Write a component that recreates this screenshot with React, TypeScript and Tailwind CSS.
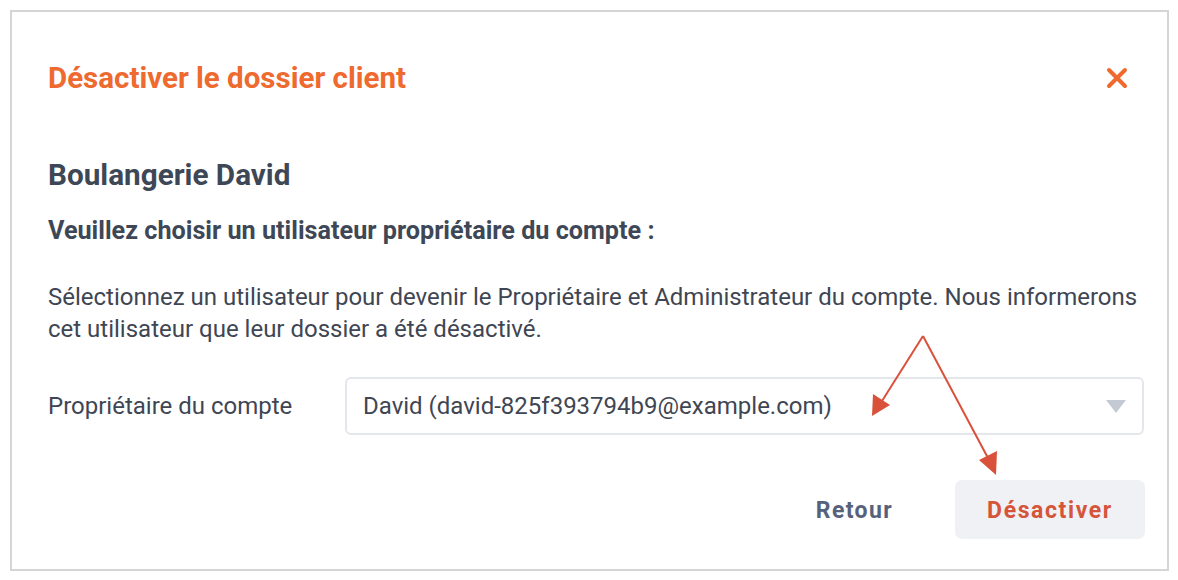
import React from "react";

function ArrowOverlay() {
  return (
    <svg
      className="pointer-events-none absolute left-0 top-0"
      width="1178"
      height="580"
      viewBox="0 0 1178 580"
    >
      <g stroke="#d9503b" strokeWidth="2" fill="none">
        <line x1="923" y1="336" x2="882" y2="401" />
        <line x1="923" y1="336" x2="988" y2="458" />
      </g>
      <polygon points="872,416 873,394 890,405" fill="#d9503b" />
      <polygon points="996,475 979,460 997,451" fill="#d9503b" />
    </svg>
  );
}

export default function App() {
  return (
    <div className="relative h-[580px] w-[1178px] bg-white p-[10px] font-['Roboto',sans-serif]">
      <div className="flex h-[561px] w-[1159px] flex-col border-2 border-[#d5d5d5] pl-[36px] pr-[22px]">
        <div className="mt-[50px] flex items-center justify-between">
          <h1 className="text-[29.5px] font-bold leading-[32px] text-[#ee6a2f]">
            Désactiver le dossier client
          </h1>
          <button className="mr-[17px] text-[#ee6a2f]" aria-label="Fermer">
            <svg width="22" height="22" viewBox="0 0 22 22">
              <path
                d="M3 3 L19 19 M19 3 L3 19"
                stroke="currentColor"
                strokeWidth="4"
                strokeLinecap="round"
              />
            </svg>
          </button>
        </div>

        <h2 className="mt-[65px] text-[29.7px] font-bold leading-[32px] text-[#3e4756]">
          Boulangerie David
        </h2>
        <p className="mt-[26px] text-[25.2px] font-bold leading-[28px] text-[#3e4756]">
          Veuillez choisir un utilisateur propriétaire du compte :
        </p>
        <p className="mt-[36px] text-[24px] leading-[32px] text-[#3f4653]">
          Sélectionnez un utilisateur pour devenir le Propriétaire et Administrateur du compte. Nous informerons
          cet utilisateur que leur dossier a été désactivé.
        </p>

        <div className="mt-[32px] flex items-center">
          <label className="w-[297px] text-[24px] text-[#3f4653]">Propriétaire du compte</label>
          <div className="flex h-[58px] w-[799px] items-center justify-between rounded-[6px] border-2 border-[#e3e6ea] pl-[16px] pr-[16px]">
            <span className="text-[24px] text-[#3f4653]">David (david-825f393794b9@example.com)</span>
            <svg width="20" height="13" viewBox="0 0 20 13">
              <polygon points="0,0 20,0 10,13" fill="#c4cad3" />
            </svg>
          </div>
        </div>

        <div className="mt-[45px] flex items-center justify-end">
          <button className="mr-[62px] pt-[3px] text-[23px] font-bold tracking-[0.06em] text-[#56627a]">
            Retour
          </button>
          <button className="h-[59px] w-[190px] rounded-[7px] bg-[#eff1f5] pt-[3px] text-[23px] font-bold tracking-[0.07em] text-[#d6553a]">
            Désactiver
          </button>
        </div>
      </div>
      <ArrowOverlay />
    </div>
  );
}
